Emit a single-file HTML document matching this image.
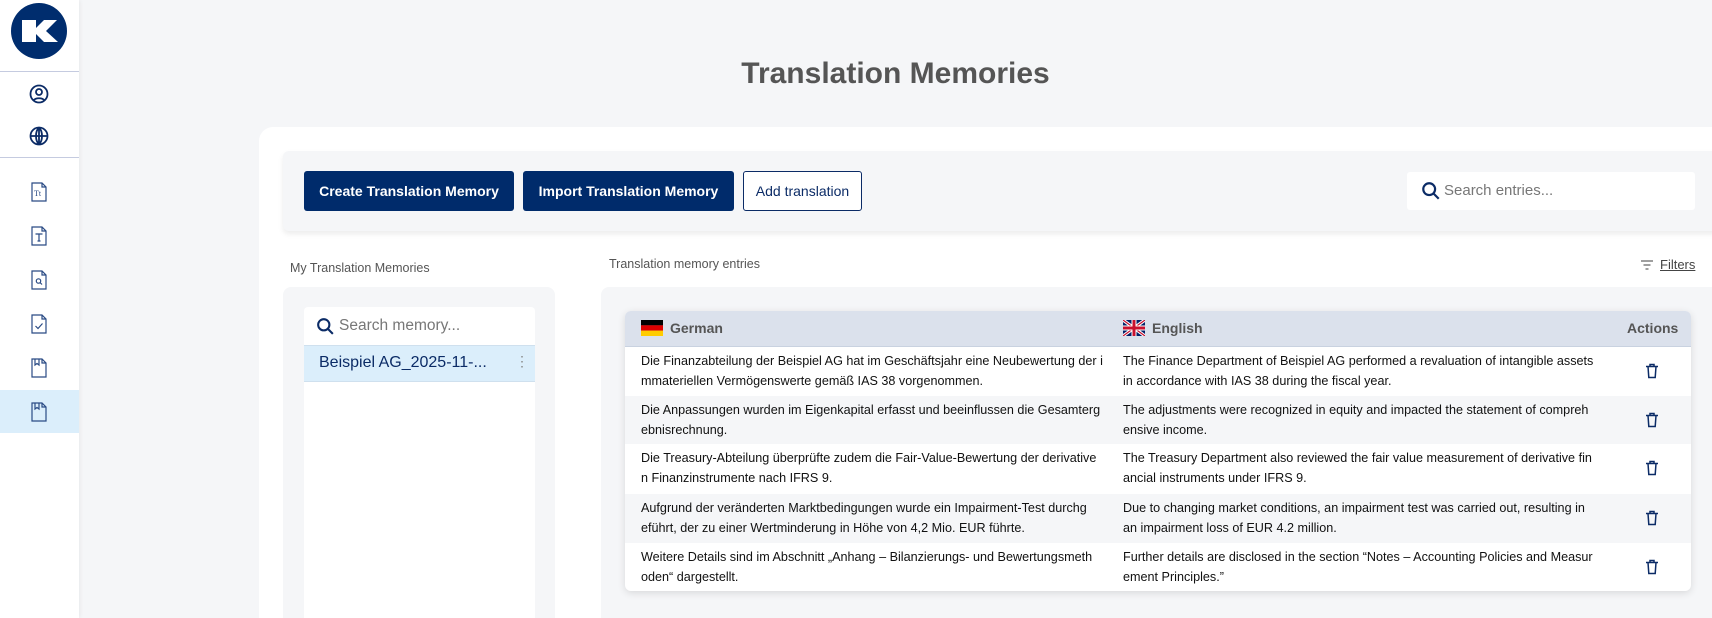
<!DOCTYPE html>
<html style="overflow:hidden;height:618px"><head><meta charset="utf-8"><style>
*{box-sizing:border-box;margin:0;padding:0}
body{width:1712px;height:618px;overflow:hidden;background:#f5f6f8;font-family:"Liberation Sans",sans-serif;position:relative}
.abs{position:absolute}
.side{left:0;top:0;width:79px;height:618px;background:#fff;box-shadow:1px 0 4px rgba(0,0,0,.06)}
.ic{position:absolute;left:27px;width:24px;height:24px}
.title{left:79px;width:1633px;top:57px;text-align:center;font-size:30px;font-weight:bold;color:#555}
.card{left:259px;top:127px;width:1470px;height:491px;background:#fff;border-radius:14px 0 0 0}
.tool{left:283px;top:151px;width:1440px;height:80px;background:#f5f6f8;border-radius:6px;box-shadow:0 3px 6px rgba(0,0,0,.08)}
.btn{top:171px;height:40px;background:#002b6b;color:#fff;font-weight:bold;font-size:14px;border-radius:3px;display:flex;align-items:center;justify-content:center}
.srch{left:1407px;top:172px;width:288px;height:38px;background:#fff;border-radius:3px;font-size:15px;color:#777;line-height:38px}
.lbl{font-size:13px;color:#555}
.row{left:625px;width:1066px;height:49px;font-size:13px;color:#111}
.c{position:absolute;white-space:nowrap;transform:scaleX(.97);transform-origin:left top;line-height:20px;top:4px}
.tr{position:absolute;left:1020px;top:16px}
</style></head><body>
<div class="abs side">
 <svg class="abs" style="left:11px;top:3px" width="56" height="56" viewBox="0 0 56 56"><circle cx="28" cy="28" r="28" fill="#002d6e"/><path d="M11 17h14v8l8-8h13l-11 11 12 11H33l-8-8v8H11z" fill="#fff"/></svg>
 <div class="abs" style="left:0;top:71px;width:79px;height:1px;background:#c5cbe0"></div>
 <div class="abs" style="left:0;top:157px;width:79px;height:1px;background:#c5cbe0"></div>
 <svg class="ic" style="top:82px" viewBox="0 0 24 24" fill="none" stroke="#0b2b66" stroke-width="1.8"><circle cx="12" cy="12" r="8.5"/><circle cx="12" cy="10" r="3"/><path d="M6.5 18.5c2-3 9-3 11 0"/></svg>
 <svg class="ic" style="top:124px" viewBox="0 0 24 24" fill="none" stroke="#0b2b66" stroke-width="1.8"><circle cx="12" cy="12" r="8.5"/><path d="M3.5 12h17M12 3.5v17M12 3.5c-4 4-4 13 0 17M12 3.5c4 4 4 13 0 17"/></svg>
 <div class="abs" style="left:0;top:390px;width:79px;height:43px;background:#dbeefb"></div>
 <svg class="ic" style="top:180px" viewBox="0 0 24 24" fill="none" stroke="#2a4b85" stroke-width="1.2"><path d="M5 3h10l4 4v14H5z M15 3v4h4"/><text x="7" y="16" font-size="8" fill="#2a4b85" stroke="none" font-family="Liberation Serif">Tt</text></svg>
 <svg class="ic" style="top:224px" viewBox="0 0 24 24" fill="none" stroke="#2a4b85" stroke-width="1.2"><path d="M5 3h10l4 4v14H5z M15 3v4h4 M8.5 10h7M12 10v7M10.5 17h3"/></svg>
 <svg class="ic" style="top:268px" viewBox="0 0 24 24" fill="none" stroke="#2a4b85" stroke-width="1.2"><path d="M5 3h10l4 4v14H5z M15 3v4h4"/><circle cx="11.5" cy="13" r="2.2"/><path d="M13 14.5l2 2"/></svg>
 <svg class="ic" style="top:312px" viewBox="0 0 24 24" fill="none" stroke="#2a4b85" stroke-width="1.2"><path d="M5 3h10l4 4v14H5z M15 3v4h4 M8.5 14l2.5 2.5 4.5-5"/></svg>
 <svg class="ic" style="top:356px" viewBox="0 0 24 24" fill="none" stroke="#2a4b85" stroke-width="1.2"><path d="M5 3h10l4 4v14H5z M15 3v4h4 M8 3v6l2-1.5 2 1.5V3"/></svg>
 <svg class="ic" style="top:400px" viewBox="0 0 24 24" fill="none" stroke="#2a4b85" stroke-width="1.2"><path d="M5 3h10l4 4v14H5z M15 3v4h4 M8 3v6l2-1.5 2 1.5V3"/></svg>
</div>
<div class="abs title">Translation Memories</div>
<div class="abs card"></div>
<div class="abs tool"></div>
<div class="abs btn" style="left:304px;width:210px">Create Translation Memory</div>
<div class="abs btn" style="left:523px;width:211px">Import Translation Memory</div>
<div class="abs btn" style="left:743px;width:119px;background:#fff;color:#0b2b66;font-weight:normal;border:1px solid #0b2b66">Add translation</div>
<div class="abs srch" style="padding-left:37px">Search entries...</div>
<svg class="abs" style="left:1421px;top:181px" width="20" height="20" viewBox="0 0 22 22" fill="none" stroke="#0b2b66" stroke-width="2.4"><circle cx="9" cy="9" r="6.5"/><path d="M13.5 13.5l6 6"/></svg>
<div class="abs lbl" style="left:290px;top:261px;font-size:12.5px">My Translation Memories</div>
<div class="abs lbl" style="left:609px;top:257px;font-size:12.5px">Translation memory entries</div>
<svg class="abs" style="left:1640px;top:259px" width="14" height="12" viewBox="0 0 14 12" stroke="#666" stroke-width="1.3"><path d="M1 2h12M3.5 6h7M5.5 10h3"/></svg>
<div class="abs lbl" style="left:1660px;top:257px;text-decoration:underline;color:#444">Filters</div>
<div class="abs" style="left:283px;top:287px;width:272px;height:340px;background:#f5f6f8;border-radius:8px"></div>
<div class="abs" style="left:304px;top:307px;width:231px;height:320px;background:#fff;border-radius:4px"></div>
<svg class="abs" style="left:316px;top:317px" width="19" height="19" viewBox="0 0 22 22" fill="none" stroke="#0b2b66" stroke-width="2.4"><circle cx="9" cy="9" r="6.5"/><path d="M13.5 13.5l6 6"/></svg>
<div class="abs" style="left:339px;top:317px;font-size:15.5px;color:#777">Search memory...</div>
<div class="abs" style="left:304px;top:345px;width:231px;height:37px;background:#dbeefb;border-top:1px solid #cfe0ee;border-bottom:1px solid #cfe0ee"></div>
<div class="abs" style="left:319px;top:354px;font-size:16px;color:#0b2b66">Beispiel AG_2025-11-...</div>
<div class="abs" style="left:515px;top:353px;font-size:14px;color:#888">&#8942;</div>
<div class="abs" style="left:601px;top:287px;width:1120px;height:340px;background:#f5f6f8;border-radius:8px"></div>
<div class="abs" style="left:625px;top:311px;width:1066px;height:280px;background:#fff;border-radius:6px;box-shadow:0 2px 8px rgba(0,0,0,.12);overflow:hidden">
 <div class="abs" style="left:0;top:0;width:1066px;height:36px;background:#dbe1ec;border-bottom:1px solid #c9d2e0"></div>
</div>
<svg class="abs" style="left:641px;top:320px" width="22" height="16"><rect width="22" height="5.4" fill="#000"/><rect y="5.3" width="22" height="5.4" fill="#d00"/><rect y="10.6" width="22" height="5.4" fill="#fc0"/></svg>
<div class="abs" style="left:670px;top:320px;font-size:14px;font-weight:bold;color:#555">German</div>
<svg class="abs" style="left:1123px;top:320px" width="22" height="16" viewBox="0 0 22 16"><rect width="22" height="16" fill="#012169"/><path d="M0 0L22 16M22 0L0 16" stroke="#fff" stroke-width="3.2"/><path d="M0 0L22 16M22 0L0 16" stroke="#c8102e" stroke-width="1.2"/><path d="M11 0v16M0 8h22" stroke="#fff" stroke-width="5"/><path d="M11 0v16M0 8h22" stroke="#c8102e" stroke-width="3"/></svg>
<div class="abs" style="left:1152px;top:320px;font-size:14px;font-weight:bold;color:#555">English</div>
<div class="abs" style="left:1627px;top:320px;font-size:14px;font-weight:bold;color:#555">Actions</div>

<div class="abs row" style="top:347px;background:#fff"><div class="c" style="left:16px">Die Finanzabteilung der Beispiel AG hat im Geschäftsjahr eine Neubewertung der i<br>mmateriellen Vermögenswerte gemäß IAS 38 vorgenommen.</div><div class="c" style="left:498px">The Finance Department of Beispiel AG performed a revaluation of intangible assets<br>in accordance with IAS 38 during the fiscal year.</div><svg class="tr" width="14" height="16" viewBox="0 0 14 16" fill="none" stroke="#0b2b66" stroke-width="1.5"><path d="M1 3.5h12M5 3.5V1.5h4v2M3 3.5l.8 11h6.4l.8-11"/></svg></div>
<div class="abs row" style="top:396px;background:#f5f6f8"><div class="c" style="left:16px">Die Anpassungen wurden im Eigenkapital erfasst und beeinflussen die Gesamterg<br>ebnisrechnung.</div><div class="c" style="left:498px">The adjustments were recognized in equity and impacted the statement of compreh<br>ensive income.</div><svg class="tr" width="14" height="16" viewBox="0 0 14 16" fill="none" stroke="#0b2b66" stroke-width="1.5"><path d="M1 3.5h12M5 3.5V1.5h4v2M3 3.5l.8 11h6.4l.8-11"/></svg></div>
<div class="abs row" style="top:444px;background:#fff"><div class="c" style="left:16px">Die Treasury-Abteilung überprüfte zudem die Fair-Value-Bewertung der derivative<br>n Finanzinstrumente nach IFRS 9.</div><div class="c" style="left:498px">The Treasury Department also reviewed the fair value measurement of derivative fin<br>ancial instruments under IFRS 9.</div><svg class="tr" width="14" height="16" viewBox="0 0 14 16" fill="none" stroke="#0b2b66" stroke-width="1.5"><path d="M1 3.5h12M5 3.5V1.5h4v2M3 3.5l.8 11h6.4l.8-11"/></svg></div>
<div class="abs row" style="top:494px;background:#f5f6f8"><div class="c" style="left:16px">Aufgrund der veränderten Marktbedingungen wurde ein Impairment-Test durchg<br>eführt, der zu einer Wertminderung in Höhe von 4,2 Mio. EUR führte.</div><div class="c" style="left:498px">Due to changing market conditions, an impairment test was carried out, resulting in<br>an impairment loss of EUR 4.2 million.</div><svg class="tr" width="14" height="16" viewBox="0 0 14 16" fill="none" stroke="#0b2b66" stroke-width="1.5"><path d="M1 3.5h12M5 3.5V1.5h4v2M3 3.5l.8 11h6.4l.8-11"/></svg></div>
<div class="abs row" style="top:543px;height:47px;background:#fff;border-radius:0 0 6px 6px"><div class="c" style="left:16px">Weitere Details sind im Abschnitt „Anhang – Bilanzierungs- und Bewertungsmeth<br>oden“ dargestellt.</div><div class="c" style="left:498px">Further details are disclosed in the section “Notes – Accounting Policies and Measur<br>ement Principles.”</div><svg class="tr" width="14" height="16" viewBox="0 0 14 16" fill="none" stroke="#0b2b66" stroke-width="1.5"><path d="M1 3.5h12M5 3.5V1.5h4v2M3 3.5l.8 11h6.4l.8-11"/></svg></div>
</body></html>
